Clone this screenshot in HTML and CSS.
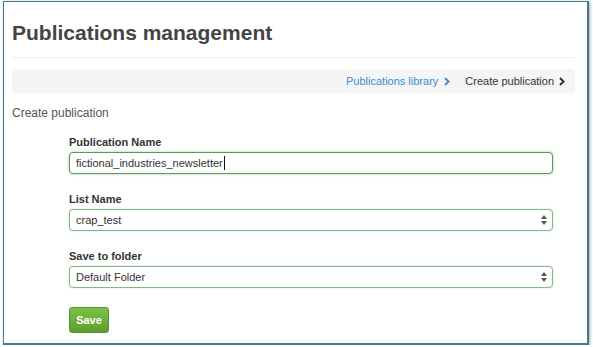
FILE: index.html
```html
<!DOCTYPE html>
<html lang="en">
<head>
  <meta charset="UTF-8">
  <title>Publications management</title>
  <meta name="viewport" content="width=device-width, initial-scale=1.0">
  <link rel="stylesheet" href="styles.css">
</head>
<body>

  <div class="frame">
    <h1 class="page-header">Publications management</h1>

    <div class="crumbs">
      <a class="crumb-link" href="#">Publications library</a>
      <svg class="chev chev-blue" width="6" height="9" viewBox="0 0 6 9"><path d="M1 1 L4.5 4.5 L1 8" fill="none" stroke="currentColor" stroke-width="2"/></svg>
      <span class="crumb-current">Create publication</span>
      <svg class="chev chev-dark" width="6" height="9" viewBox="0 0 6 9"><path d="M1 1 L4.5 4.5 L1 8" fill="none" stroke="currentColor" stroke-width="2"/></svg>
    </div>

    <h2 class="section-title">Create publication</h2>

    <form class="pub-form" onsubmit="return false">
      <div class="form-group">
        <label>Publication Name</label>
        <div class="field field-focus">fictional_industries_newsletter<span class="caret"></span></div>
      </div>

      <div class="form-group">
        <label>List Name</label>
        <div class="select-wrap">
          <select class="field">
            <option>crap_test</option>
          </select>
          <svg class="arrows" width="6" height="10" viewBox="0 0 6 10"><path d="M3 0 L6 4 L0 4 Z M3 10 L6 6 L0 6 Z" fill="#555"/></svg>
        </div>
      </div>

      <div class="form-group last">
        <label>Save to folder</label>
        <div class="select-wrap">
          <select class="field">
            <option>Default Folder</option>
          </select>
          <svg class="arrows" width="6" height="10" viewBox="0 0 6 10"><path d="M3 0 L6 4 L0 4 Z M3 10 L6 6 L0 6 Z" fill="#555"/></svg>
        </div>
      </div>

      <button class="btn-save" type="submit">Save</button>
    </form>
  </div>

</body>
</html>
```

FILE: styles.css
```css
* { box-sizing: border-box; }

body {
  margin: 0;
  background-color: white;
  font-family: "Liberation Sans", Helvetica, Arial, sans-serif;
  color: #333;
}

.frame {
  width: 586px;
  height: 344px;
  margin: 1px 0 0 3px;
  padding: 19px 12px 0 8px;
  border-style: solid;
  border-color: #3f7a93;
  border-width: 1px 2px 2px 1px;
  box-shadow: 1px 1px 3px rgba(0, 0, 0, 0.35);
  background-color: white;
}

.page-header {
  margin: 0;
  padding-bottom: 13px;
  border-bottom: 1px solid #eee;
  font-size: 21px;
  line-height: 23px;
  font-weight: bold;
  color: #444;
}

.crumbs {
  display: flex;
  justify-content: flex-end;
  align-items: center;
  margin-top: 11px;
  padding: 5px 10px;
  background-color: #f5f5f5;
  border-radius: 4px;
  font-size: 11px;
  line-height: 14px;
}

.crumb-link {
  color: #428bca;
  text-decoration: none;
}

.chev {
  margin-left: 6px;
}

.chev-blue {
  color: #428bca;
  margin-right: 15px;
}

.chev-dark {
  color: #333;
  margin-left: 5px;
}

.crumb-current {
  color: #333;
}

.section-title {
  margin: 13px 0 0;
  font-size: 12px;
  line-height: 14px;
  font-weight: normal;
  color: #555;
}

.pub-form {
  margin-top: 15px;
  padding-left: 57px;
  width: 541px;
}

.form-group {
  margin-bottom: 18px;
}

.form-group.last {
  margin-bottom: 19px;
}

label {
  display: block;
  margin-bottom: 3px;
  font-size: 11px;
  line-height: 14px;
  font-weight: bold;
  color: #333;
}

.field {
  display: flex;
  align-items: center;
  width: 100%;
  height: 22px;
  padding: 0 6px;
  border: 1px solid #82b882;
  border-radius: 4px;
  background-color: white;
  font-family: inherit;
  font-size: 11px;
  color: #333;
  box-shadow: 0 0 2px rgba(60, 140, 60, 0.25);
}

.field-focus {
  border-color: #5f935f;
  box-shadow: 0 0 3px rgba(60, 140, 60, 0.45);
}

.caret {
  display: inline-block;
  width: 1px;
  height: 14px;
  margin-left: 1px;
  background-color: #111;
}

select.field {
  -webkit-appearance: none;
  appearance: none;
  outline: none;
}

.select-wrap {
  position: relative;
}

.arrows {
  position: absolute;
  right: 6px;
  top: 6px;
}

.btn-save {
  width: 40px;
  height: 26px;
  padding: 0;
  border: 1px solid #55912b;
  border-radius: 3px;
  background: linear-gradient(#7dc146, #5c9e2d);
  color: white;
  font-family: inherit;
  font-size: 11px;
  font-weight: bold;
  cursor: pointer;
}
```
